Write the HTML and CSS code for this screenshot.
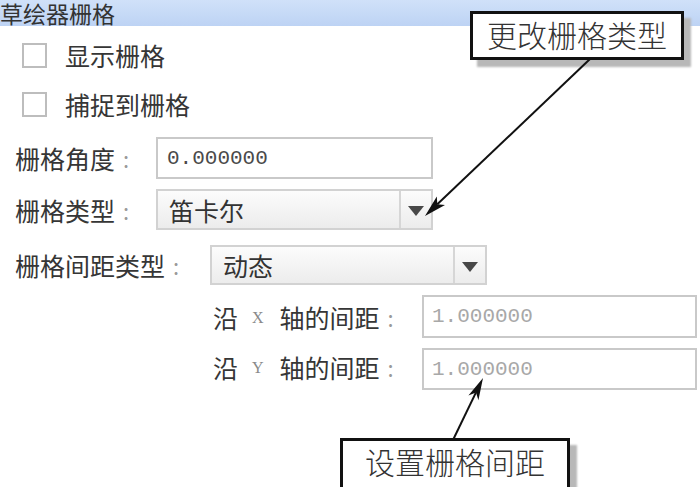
FILE: index.html
```html
<!doctype html>
<html>

<head>
	<meta charset="utf-8">
	<title>草绘器栅格</title>
	<link rel="stylesheet" href="styles.css">
</head>

<body>
	<div class="panel">
		<div class="title">草绘器栅格</div>

		<div class="check first">
			<span class="box"></span>
			<span class="txt">显示栅格</span>
		</div>
		<div class="check second">
			<span class="box"></span>
			<span class="txt">捕捉到栅格</span>
		</div>

		<div class="row angle">
			<div class="lbl">栅格角度<span class="colon">:</span></div>
			<div class="field"><span class="num">0.000000</span></div>
		</div>
		<div class="row type">
			<div class="lbl">栅格类型<span class="colon">:</span></div>
			<div class="combo">
				<span class="sel">笛卡尔</span>
				<span class="btn"><span class="tri"></span></span>
			</div>
		</div>
		<div class="row spacing">
			<div class="lbl">栅格间距类型<span class="colon">:</span></div>
			<div class="combo">
				<span class="sel">动态</span>
				<span class="btn"><span class="tri"></span></span>
			</div>
		</div>
		<div class="row axis xrow">
			<div class="lbl">沿<span class="ax">X</span>轴的间距<span class="colon">:</span></div>
			<div class="field dim"><span class="num">1.000000</span></div>
		</div>
		<div class="row axis yrow">
			<div class="lbl">沿<span class="ax">Y</span>轴的间距<span class="colon">:</span></div>
			<div class="field dim"><span class="num">1.000000</span></div>
		</div>
	</div>

	<!-- callouts -->
	<div class="callout top">更改栅格类型</div>
	<div class="callout bottom">设置栅格间距</div>

	<svg class="arrows" width="700" height="487" viewBox="0 0 700 487">
		<line x1="590" y1="59" x2="437.3" y2="204.3" stroke="#111" stroke-width="2"/>
		<polygon points="425,216 436.8,196.5 437.3,204.3 445,205.1" fill="#111"/>
		<line x1="453" y1="440" x2="476" y2="392.4" stroke="#111" stroke-width="2"/>
		<polygon points="483,378 478.4,400.2 476,392.4 468.4,395.4" fill="#111"/>
	</svg>
</body>

</html>
```

FILE: styles.css
```css
body {
	margin: 0;
	width: 700px;
	height: 487px;
	overflow: hidden;
	background: #ffffff;
	font-family: "Noto Sans CJK SC", "Noto Sans", sans-serif;
	color: #363636;
	position: relative;
}

.panel {
	display: flex;
	flex-direction: column;
}

.title {
	height: 26px;
	line-height: 26px;
	font-size: 23px;
	background: linear-gradient(#d0e1f9, #bdd3f4);
	color: #333333;
	white-space: nowrap;
}

.check {
	display: flex;
	align-items: center;
	padding-left: 22px;
	height: 26px;
	font-size: 25px;
}

.check.first {
	margin-top: 16px;
}

.check.second {
	margin-top: 23px;
}

.box {
	width: 21px;
	height: 21px;
	border: 2px solid #bdbdbd;
	background: #ffffff;
	margin-right: 18px;
}

.row {
	display: flex;
	align-items: center;
	font-size: 25px;
	padding-left: 15px;
}

.row.angle {
	margin-top: 20px;
	height: 42px;
}

.row.type {
	margin-top: 10px;
	height: 41px;
}

.row.spacing {
	margin-top: 15px;
	height: 40px;
}

.row.axis {
	padding-left: 213px;
}

.row.xrow {
	margin-top: 10px;
	height: 43px;
}

.row.yrow {
	margin-top: 10px;
	height: 42px;
}

.lbl {
	white-space: nowrap;
	display: flex;
	align-items: center;
}

.angle .lbl,
.type .lbl {
	width: 141px;
}

.spacing .lbl {
	width: 195px;
}

.axis .lbl {
	width: 209px;
}

.yrow .lbl {
	margin-top: -4px;
}

.colon {
	color: #9a9a9a;
	margin-left: 8px;
	font-size: 22px;
}

.ax {
	font-family: "Liberation Serif", serif;
	font-size: 16px;
	color: #8a8a8a;
	margin: 2px 16px 0 14px;
}

.field {
	box-sizing: border-box;
	width: 277px;
	height: 100%;
	border: 2px solid #c9c9c9;
	background: #ffffff;
	display: flex;
	align-items: center;
	padding-left: 9px;
}

.field.dim {
	width: 275px;
	padding-left: 8px;
}

.num {
	font-family: "Liberation Mono", monospace;
	font-size: 21px;
	color: #4a4a4a;
}

.dim .num {
	color: #a8a8a8;
}

.combo {
	box-sizing: border-box;
	width: 277px;
	height: 100%;
	border: 2px solid #d2d2d2;
	background: linear-gradient(#fcfcfc, #ececec);
	display: flex;
	align-items: center;
}

.sel {
	flex: 1;
	padding-left: 11px;
	color: #333333;
}

.btn {
	width: 30px;
	height: 100%;
	border-left: 2px solid #d6d6d6;
	display: flex;
	align-items: center;
	justify-content: center;
}

.tri {
	width: 0;
	height: 0;
	border-left: 8px solid transparent;
	border-right: 8px solid transparent;
	border-top: 10px solid #484848;
	margin-top: 3px;
}

.callout {
	position: absolute;
	box-sizing: border-box;
	background: #ffffff;
	border: 3px solid #111111;
	box-shadow: 7px 7px 2px #b8b8b8;
	font-size: 30px;
	font-weight: 300;
	color: #333333;
	text-align: center;
	white-space: nowrap;
}

.callout.top {
	left: 470px;
	top: 11px;
	width: 214px;
	height: 49px;
	line-height: 40px;
}

.callout.bottom {
	left: 340px;
	top: 438px;
	width: 230px;
	height: 60px;
	line-height: 40px;
}

.arrows {
	position: absolute;
	left: 0;
	top: 0;
	pointer-events: none;
}
```
